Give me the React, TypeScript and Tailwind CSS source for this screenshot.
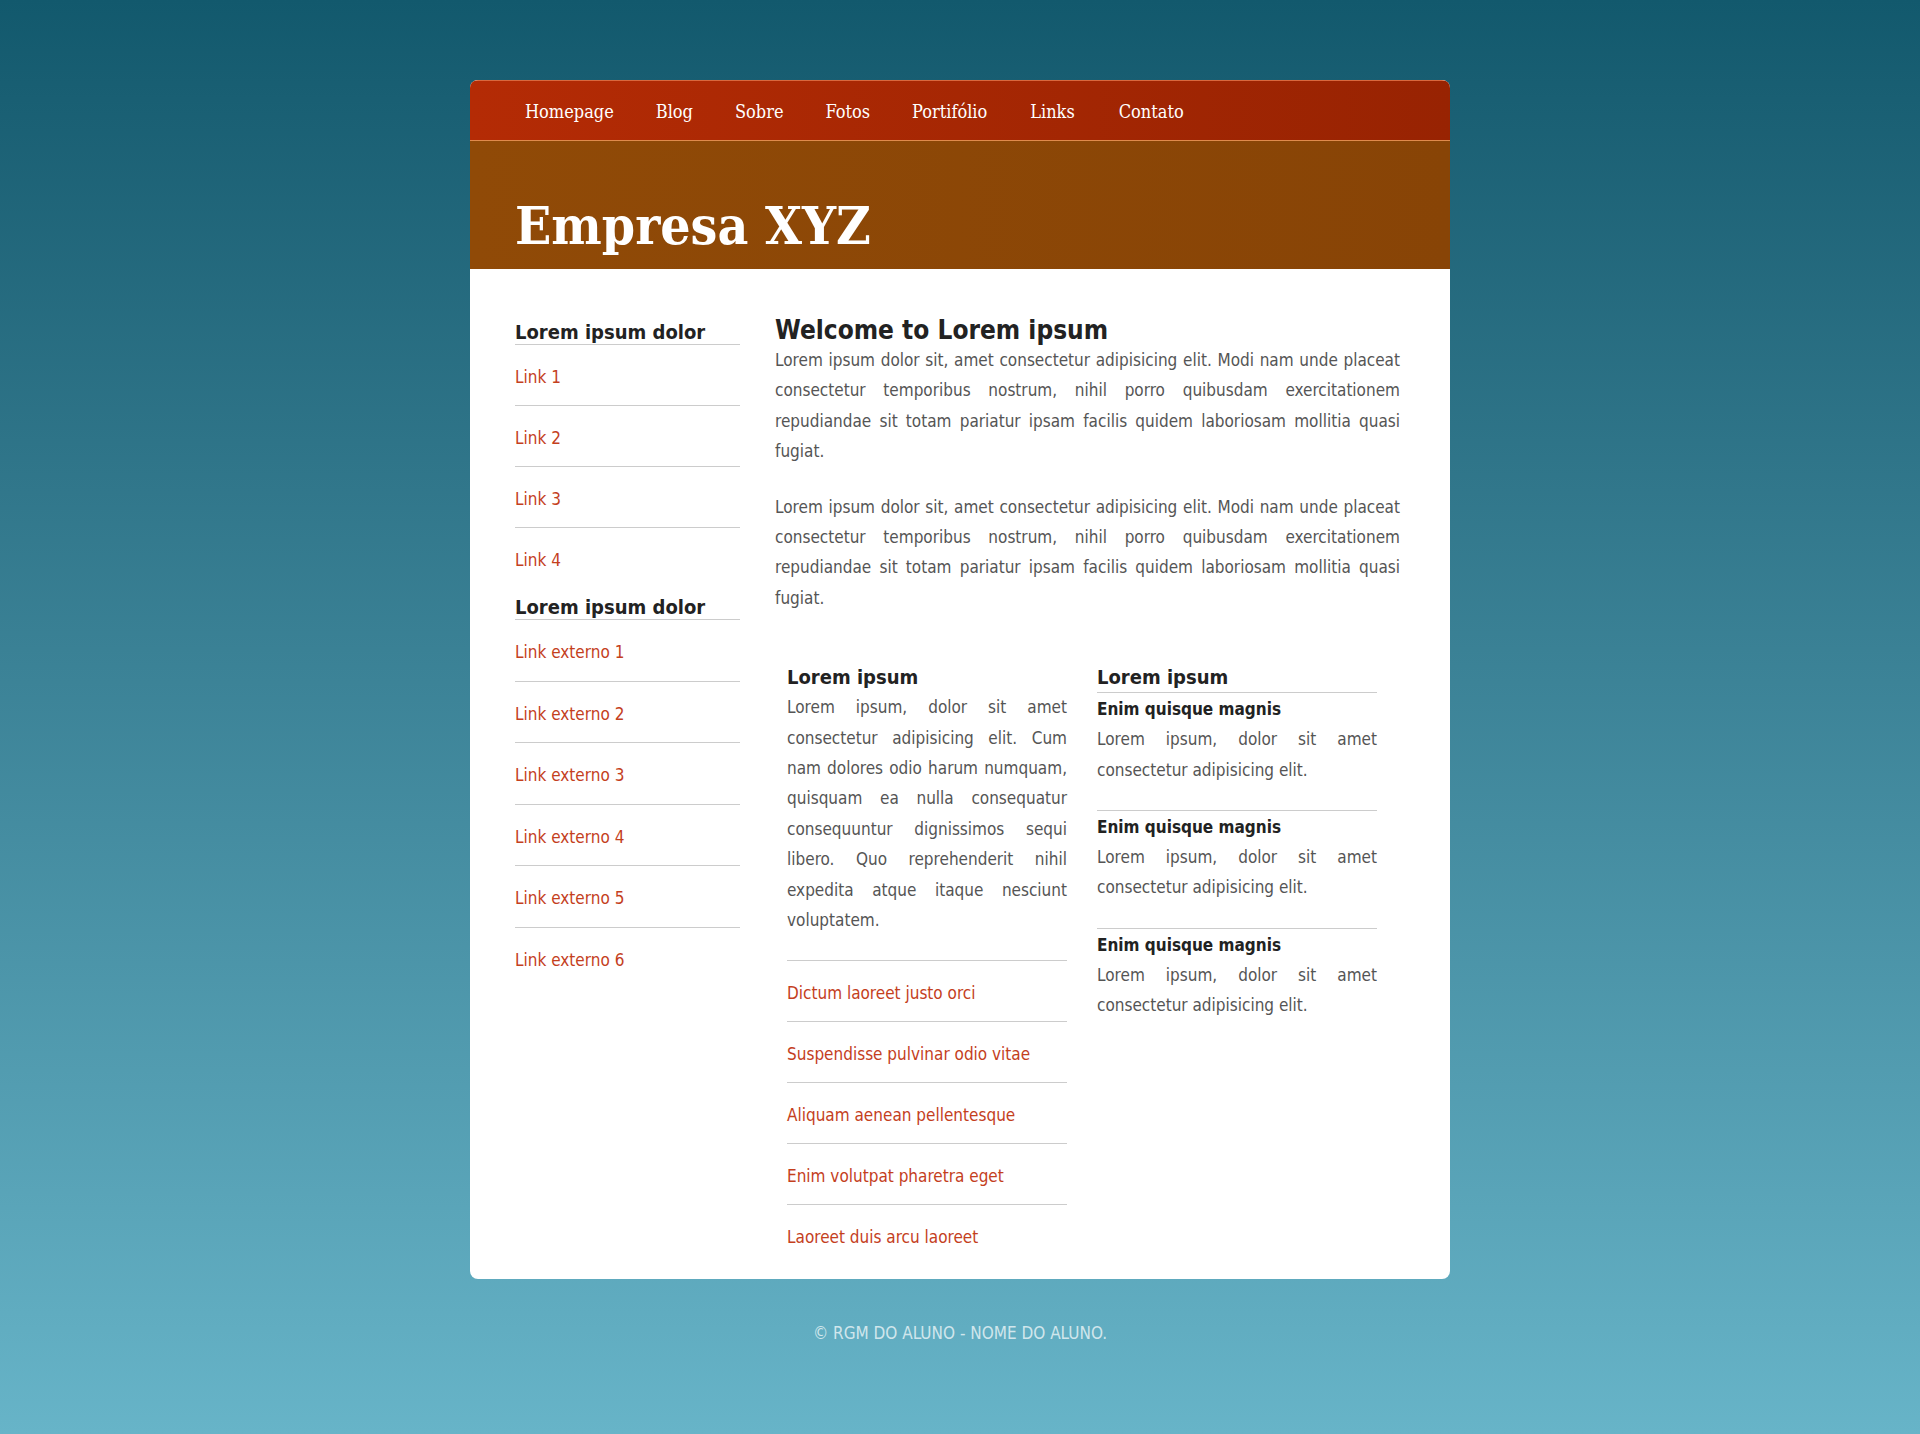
const navItems = ["Homepage", "Blog", "Sobre", "Fotos", "Portifólio", "Links", "Contato"];
const sideLinks = ["Link 1", "Link 2", "Link 3", "Link 4"];
const extLinks = [
  "Link externo 1",
  "Link externo 2",
  "Link externo 3",
  "Link externo 4",
  "Link externo 5",
  "Link externo 6",
];
const moreLinks = [
  "Dictum laoreet justo orci",
  "Suspendisse pulvinar odio vitae",
  "Aliquam aenean pellentesque",
  "Enim volutpat pharetra eget",
  "Laoreet duis arcu laoreet",
];

const intro =
  "Lorem ipsum dolor sit, amet consectetur adipisicing elit. Modi nam unde placeat consectetur temporibus nostrum, nihil porro quibusdam exercitationem repudiandae sit totam pariatur ipsam facilis quidem laboriosam mollitia quasi fugiat.";

function LinkList({
  items,
  className = "",
  itemClass = "pt-[22px] pb-[18px]",
}: {
  items: string[];
  className?: string;
  itemClass?: string;
}) {
  return (
    <ul className={className}>
      {items.map((item) => (
        <li key={item} className={`border-b border-[#cccccc] leading-5 last:border-b-0 ${itemClass}`}>
          <a href="#" className="text-[#c4401d]">
            {item}
          </a>
        </li>
      ))}
    </ul>
  );
}

export default function App() {
  return (
    <div className="min-h-screen bg-gradient-to-b from-[#12596d] to-[#67b4c8] pt-20 text-[17px] font-stretch-condensed [font-family:'DejaVu_Sans_Condensed','DejaVu_Sans',sans-serif]">
      <div className="mx-auto w-[980px] overflow-hidden rounded-lg bg-white">
        <nav className="flex h-[61px] items-center border-t border-b border-t-[#d9683e] border-b-[#e08a4c] bg-gradient-to-r from-[#b42b05] to-[#982302] pt-[2px] pl-[34px] text-[18px] text-white [font-family:'DejaVu_Serif_Condensed','DejaVu_Serif',serif]">
          {navItems.map((item, i) => (
            <a key={item} href="#" className={i >= 5 ? "px-[22px]" : "px-[21px]"}>
              {item}
            </a>
          ))}
        </nav>

        <header className="flex h-[128px] items-end bg-gradient-to-r from-[#904a07] to-[#884406] pb-[17px] pl-[45px]">
          <h1 className="text-[53px] leading-none font-bold text-white [font-family:'DejaVu_Serif_Condensed','DejaVu_Serif',serif]">
            Empresa XYZ
          </h1>
        </header>

        <div className="flex pt-[46px] pr-[50px] pb-[14px] pl-[45px]">
          <aside className="mr-[35px] w-[225px] shrink-0">
            <h3 className="mt-[5px] border-b border-[#cccccc] text-[20px] leading-6 font-bold text-[#222222]">
              Lorem ipsum dolor
            </h3>
            <LinkList items={sideLinks} />
            <h3 className="mt-[7px] border-b border-[#cccccc] text-[20px] leading-6 font-bold text-[#222222]">
              Lorem ipsum dolor
            </h3>
            <LinkList items={extLinks} itemClass="pt-[22px] pb-[18.5px]" />
          </aside>

          <main className="flex-1">
            <h2 className="text-[26px] leading-[30px] font-bold text-[#222222]">Welcome to Lorem ipsum</h2>
            <p className="mb-[25px] text-justify leading-[30.4px] text-[#555555]">{intro}</p>
            <p className="text-justify leading-[30.4px] text-[#555555]">{intro}</p>

            <div className="mt-[49px] flex gap-[30px] pl-[12px]">
              <section className="w-[280px]">
                <h3 className="text-[20px] leading-[30px] font-bold text-[#222222]">Lorem ipsum</h3>
                <p className="text-justify leading-[30.4px] text-[#555555]">
                  Lorem ipsum, dolor sit amet consectetur adipisicing elit. Cum nam dolores odio harum
                  numquam, quisquam ea nulla consequatur consequuntur dignissimos sequi libero. Quo
                  reprehenderit nihil expedita atque itaque nesciunt voluptatem.
                </p>
                <LinkList items={moreLinks} className="mt-[24px] border-t border-[#cccccc]" />
              </section>

              <section className="w-[280px]">
                <h3 className="border-b border-[#cccccc] text-[20px] leading-[30px] font-bold text-[#222222]">
                  Lorem ipsum
                </h3>
                {[0, 1, 2].map((i) => (
                  <div key={i} className="border-b border-[#cccccc] pt-[6px] pb-[25px] last:border-b-0">
                    <h4 className="text-[17px] leading-5 font-bold text-[#222222]">Enim quisque magnis</h4>
                    <p className="mt-[5px] text-justify leading-[30.4px] text-[#555555]">
                      Lorem ipsum, dolor sit amet consectetur adipisicing elit.
                    </p>
                  </div>
                ))}
              </section>
            </div>
          </main>
        </div>
      </div>

      <footer className="mt-[44px] text-center leading-5 text-[#d0e6ec]">© RGM DO ALUNO - NOME DO ALUNO.</footer>
    </div>
  );
}
